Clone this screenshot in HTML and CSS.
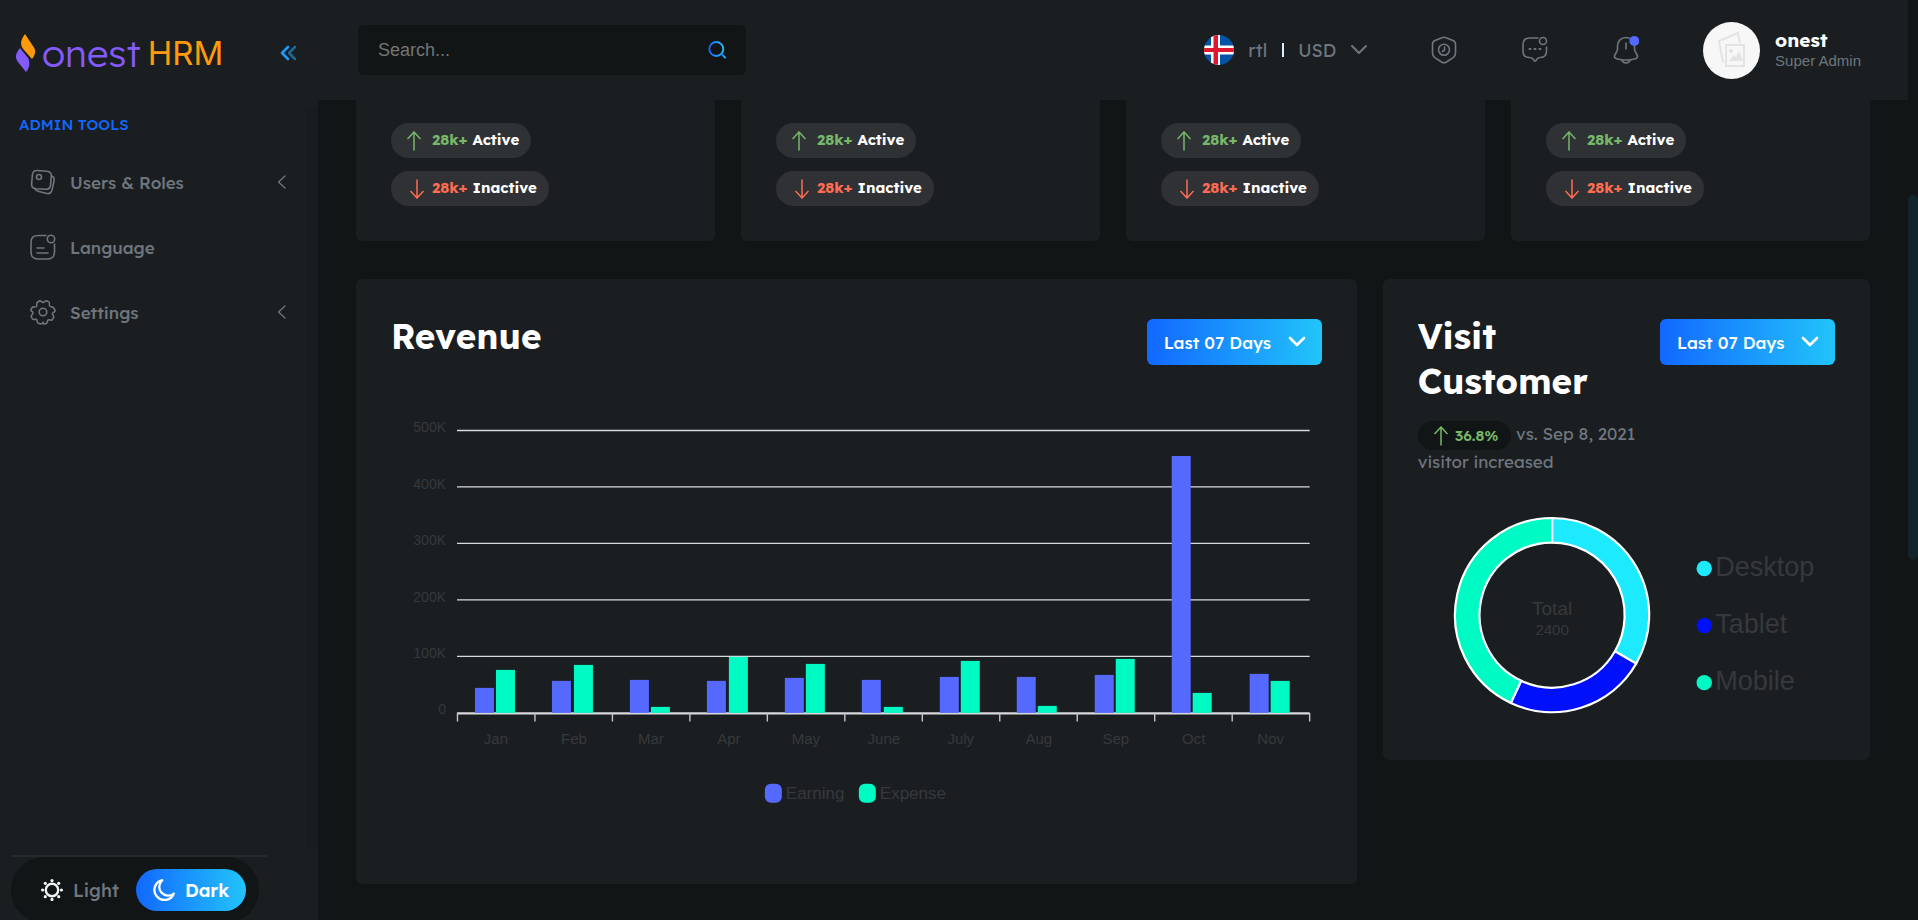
FILE: index.html
```html
<!DOCTYPE html>
<html lang="en">
<head>
<meta charset="utf-8">
<meta name="viewport" content="width=device-width, initial-scale=1">
<title>onestHRM – Dashboard</title>
<link rel="stylesheet" href="styles.css">
</head>
<body>
<svg class="defs" width="0" height="0" aria-hidden="true">
  <defs>
    <linearGradient id="brand" x1="0" y1="0" x2="1" y2="0"><stop offset="0" stop-color="#1268ff"/><stop offset="1" stop-color="#22c4fa"/></linearGradient>
    <symbol id="up" viewBox="0 0 14 20"><path d="M7 19.500V1M.5 8L7 1l6.500 7" fill="none" stroke="currentColor" stroke-width="1.500"/></symbol>
    <symbol id="down" viewBox="0 0 14 20"><path d="M7 .5V19M.5 12L7 19l6.500-7" fill="none" stroke="currentColor" stroke-width="1.500"/></symbol>
    <symbol id="caret" viewBox="0 0 18 12"><path d="M2 2l7 7 7-7" fill="none" stroke="currentColor" stroke-linecap="round" stroke-linejoin="round"/></symbol>
  </defs>
</svg>

<aside class="sidebar">
  <div class="brand">
    <a class="logo" href="#" aria-label="onestHRM">
      <svg class="flame" viewBox="0 0 20 38" width="20" height="38" aria-hidden="true">
        <path d="M9 0C4 7 4 11 8 16l8 9c4-5 4-9 1-13Z" fill="#ff9a0c"/>
        <path d="M4 14c-5 6-5 10-2 14l8 10c4-5 4-10 2-14Z" fill="#845bfb"/>
      </svg>
      <span class="logo-a">onest</span><span class="logo-b">HRM</span>
    </a>
    <button class="collapse" type="button" aria-label="Collapse menu">
      <svg viewBox="0 0 18 16" width="18" height="16" fill="none" stroke-width="2.600" stroke-linecap="round" stroke-linejoin="round"><path d="M8 2L2 8l6 6" stroke="#1b9bff"/><path d="M15 2L9 8l6 6" stroke="#1d6a91"/></svg>
    </button>
  </div>
  <nav class="nav">
    <h2 class="nav-title">ADMIN TOOLS</h2>
    <a class="nav-item" href="#">
      <svg viewBox="0 0 26 26" width="26" height="26" class="ico"><path d="M7 1.500l10 .800c3 .3 4.500 2 4.300 4.800l-.8 9c-.3 3-2 4.300-4.700 4.200L6 19.800c-3-.3-4.600-2-4.400-4.800l.8-9C2.700 3 4.200 1.400 7 1.500Z"/><path d="M22 7c2 1 2.500 2.500 2 5l-2 9c-.8 3-2.500 4-5.200 3.500L9 22.500c-2-.5-3.500-1.200-4.300-2.800"/><circle cx="9" cy="8" r="2.500"/></svg>
      <span>Users &amp; Roles</span>
      <svg viewBox="0 0 9 14" width="9" height="14" class="ico arrow"><path d="M8 1L1.500 7 8 13"/></svg>
    </a>
    <a class="nav-item" href="#">
      <svg viewBox="0 0 26 26" width="26" height="26" class="ico"><path d="M16 1.500H8.500C3 1.500 1 3.500 1 9v8.500c0 5.500 2 7.500 7.500 7.500H17c5.500 0 7.500-2 7.500-7.500V10"/><circle cx="21" cy="5" r="3.700"/><path d="M7 14h7M7 19h11"/></svg>
      <span>Language</span>
    </a>
    <a class="nav-item" href="#">
      <svg viewBox="0 0 26 26" width="26" height="26" class="ico"><circle cx="13" cy="13" r="3.800"/><path d="M13 3.500c1.500 0 2-2 3.500-1.800l2.300 1.200c1.300 1 .1 2.600.8 3.900.8 1.300 2.900.8 4 2 .8 1 1.400 2 1.500 3-.1 1.500-2.300 1.200-2.600 2.600-.4 1.500 1.500 2.400 1.200 3.900l-1.500 2.500c-1.200 1-2.500-.6-4 .2-1.300.9-.5 2.800-2 3.500l-2 .4c-1.500.1-1.200-1.800-1.200-1.800s-.5 1.900-2.500 1.800l-2.500-.9c-1.300-1-.3-2.300-1.300-3.300-1.300-1-3 .5-4.200-.7L1.200 17.500c-.3-1.500 1.800-2 1.800-3.800S.5 12.500.8 10.700l1.500-2.400c1.200-1 3 .3 4.100-.8 1-1.300-.3-3 1-4.200l2.400-1.500C11.500 1.500 11.500 3.500 13 3.500Z"/></svg>
      <span>Settings</span>
      <svg viewBox="0 0 9 14" width="9" height="14" class="ico arrow"><path d="M8 1L1.500 7 8 13"/></svg>
    </a>
    <div class="nav-track"></div>
  </nav>
  <div class="theme">
    <div class="theme-switch">
      <button type="button" class="theme-btn">
        <svg viewBox="0 0 22 22" width="22" height="22"><circle cx="11" cy="11" r="6.200" fill="none" stroke="#f2f5f7" stroke-width="2.400"/><g fill="#f2f5f7"><circle cx="11" cy="1.600" r="1.600"/><circle cx="11" cy="20.400" r="1.600"/><circle cx="1.600" cy="11" r="1.600"/><circle cx="20.400" cy="11" r="1.600"/><circle cx="4.300" cy="4.300" r="1.600"/><circle cx="17.700" cy="4.300" r="1.600"/><circle cx="4.300" cy="17.700" r="1.600"/><circle cx="17.700" cy="17.700" r="1.600"/></g></svg>
        <span>Light</span>
      </button>
      <button type="button" class="theme-btn active">
        <svg viewBox="0 0 22 22" width="22" height="22"><path d="M9.300 1.200A10 10 0 1 0 20.800 14.500 8.500 8.500 0 0 1 9.300 1.200Z" fill="none" stroke="#fff" stroke-width="2.300" stroke-linejoin="round"/></svg>
        <span>Dark</span>
      </button>
    </div>
  </div>
</aside>

<header class="topbar">
  <form class="search">
    <input type="search" placeholder="Search..." aria-label="Search">
    <button type="button" aria-label="Search"><svg viewBox="0 0 18 18" width="18" height="18" fill="none" stroke="url(#brand)" stroke-width="1.800" stroke-linecap="round"><circle cx="8.300" cy="8" r="7"/><path d="M14 13.500l3 3"/></svg></button>
  </form>
  <button class="locale" type="button">
    <svg viewBox="0 0 30 30" width="30" height="30" aria-hidden="true"><clipPath id="round"><circle cx="15" cy="15" r="15"/></clipPath><g clip-path="url(#round)"><path d="M0 0h30v30H0z" fill="#0553a5"/><path d="M7 0h9v30H7zM0 10.500h30v9H0z" fill="#fff"/><path d="M9.500 0h4.500v30H9.500zM0 13h30v4H0z" fill="#e0182f"/></g></svg>
    <span>rtl</span><i class="bar"></i><span>USD</span>
    <svg class="locale-caret" width="18" height="12"><use href="#caret"/></svg>
  </button>
  <div class="tools">
    <button type="button" aria-label="Attendance"><svg viewBox="0 0 26 28" width="26" height="28" class="ico"><path d="M11 1.700c1.300-.6 2.700-.6 4 0l7 2.800c1.600.7 2.500 1.800 2.500 3.500v9c0 2-.8 3.500-2.300 4.700L15.500 26c-1.600 1-3.400 1-5 0l-6.700-4.300C2.300 20.500 1.500 19 1.500 17V8c0-1.700.9-2.800 2.500-3.500Z"/><circle cx="13" cy="13.700" r="5.500"/><path d="M13.500 11v3l-2 1.500"/></svg></button>
    <button type="button" aria-label="Messages"><svg viewBox="0 0 26 28" width="26" height="28" class="ico"><path d="M16 2H8C3 2 1 4 1 9v6c0 5 2 6.500 6 6.500 2 0 3 0 3.800 1.200l1.200 1.800c.6.800 1.400.8 2 0l1.200-1.800c.8-1.200 1.800-1.200 3.300-1.200 4 0 6-1.500 6-6.500v-4"/><circle cx="21" cy="5" r="3.500"/><path d="M7.500 13h1M12.500 13h1M17.500 13h1" stroke-width="2"/></svg></button>
    <button type="button" aria-label="Notifications"><svg viewBox="0 0 26 28" width="26" height="28" class="ico"><path d="M13 1.500C8 1.500 4.500 5 4.500 10v3c0 3-2.500 4.700-3 7-.3 1.500.5 2.300 2 2.700 6 1.700 13 1.700 19 0 1.500-.4 2.300-1.200 2-2.700-.5-2.300-3-4-3-7v-3c0-5-3.500-8.500-8.500-8.500ZM13 7v6M8.500 23.500c1.500 4.500 7.500 4.500 9 0"/><circle cx="21.300" cy="5" r="5" fill="#5669ff" stroke="none"/></svg></button>
  </div>
  <div class="profile">
    <svg class="avatar" viewBox="0 0 57 57" width="57" height="57" aria-hidden="true"><circle cx="28.500" cy="28.500" r="28.500" fill="#f7f7f7"/><g fill="none" stroke="#e3e3e3" stroke-width="2"><path d="M20 40.500L16 19l19-8 2 10"/><path d="M23 23h18v21H23z"/></g><path d="M26 39l5-6 2 2 3-6 4 10Z" fill="#e3e3e3"/><circle cx="28" cy="29" r="2" fill="#e3e3e3"/></svg>
    <div><strong>onest</strong><small>Super Admin</small></div>
  </div>
</header>

<main class="content">
  <section class="stat"><p class="pill up"><svg width="14" height="20"><use href="#up"/></svg><b>28k+</b><span>Active</span></p><p class="pill down"><svg width="14" height="20"><use href="#down"/></svg><b>28k+</b><span>Inactive</span></p></section>
  <section class="stat"><p class="pill up"><svg width="14" height="20"><use href="#up"/></svg><b>28k+</b><span>Active</span></p><p class="pill down"><svg width="14" height="20"><use href="#down"/></svg><b>28k+</b><span>Inactive</span></p></section>
  <section class="stat"><p class="pill up"><svg width="14" height="20"><use href="#up"/></svg><b>28k+</b><span>Active</span></p><p class="pill down"><svg width="14" height="20"><use href="#down"/></svg><b>28k+</b><span>Inactive</span></p></section>
  <section class="stat"><p class="pill up"><svg width="14" height="20"><use href="#up"/></svg><b>28k+</b><span>Active</span></p><p class="pill down"><svg width="14" height="20"><use href="#down"/></svg><b>28k+</b><span>Inactive</span></p></section>

  <section class="card revenue">
    <div class="card-head">
      <h1>Revenue</h1>
      <button class="range" type="button">Last 07 Days <svg width="18" height="12"><use href="#caret"/></svg></button>
    </div>
    <svg class="chart" viewBox="0 0 931 449" role="img" aria-label="Earning and expense by month">
      <g transform="translate(66 313)">
        <path d="M0-282.500h853M0-226h853M0-169.500h853M0-113h853M0-56.500h853" stroke="#d9dadd" stroke-width="1.300"/>
        <path d="M0 .5h853" stroke="#d9dadd" stroke-width="2.400"/>
        <path d="M.5 0v8.500M78 0v8.500M155.500 0v8.500M233 0v8.500M310.500 0v8.500M388 0v8.500M465.500 0v8.500M543 0v8.500M620.500 0v8.500M698 0v8.500M775.500 0v8.500M853 0v8.500" stroke="#c4c6c9" stroke-width="1.400"/>
        <g fill="#5669ff">
          <rect x="18" y="-25" width="19" height="25"/><rect x="95" y="-32" width="19" height="32"/><rect x="173" y="-33" width="19" height="33"/><rect x="250" y="-32" width="19" height="32"/><rect x="328" y="-35" width="19" height="35"/><rect x="405" y="-33" width="19" height="33"/><rect x="483" y="-36" width="19" height="36"/><rect x="560" y="-36" width="19" height="36"/><rect x="638" y="-38" width="19" height="38"/><rect x="715" y="-257" width="19" height="257"/><rect x="793" y="-39" width="19" height="39"/>
        </g>
        <g fill="#00fac4">
          <rect x="39" y="-43" width="19" height="43"/><rect x="117" y="-48" width="19" height="48"/><rect x="194" y="-6" width="19" height="6"/><rect x="272" y="-56" width="19" height="56"/><rect x="349" y="-49" width="19" height="49"/><rect x="427" y="-6" width="19" height="6"/><rect x="504" y="-52" width="19" height="52"/><rect x="581" y="-7" width="19" height="7"/><rect x="659" y="-54" width="19" height="54"/><rect x="736" y="-20" width="19" height="20"/><rect x="814" y="-32" width="19" height="32"/>
        </g>
        <g class="axis-y"><text x="-11" y="-281">500K</text><text x="-11" y="-224">400K</text><text x="-11" y="-168">300K</text><text x="-11" y="-111">200K</text><text x="-11" y="-55">100K</text><text x="-11" y="1">0</text></g>
        <g class="axis-x"><text x="39" y="31">Jan</text><text x="117" y="31">Feb</text><text x="194" y="31">Mar</text><text x="272" y="31">Apr</text><text x="349" y="31">May</text><text x="427" y="31">June</text><text x="504" y="31">July</text><text x="582" y="31">Aug</text><text x="659" y="31">Sep</text><text x="737" y="31">Oct</text><text x="814" y="31">Nov</text></g>
        <g class="axis-legend"><rect x="308" y="71" width="17" height="19" rx="6" fill="#5669ff"/><text x="329" y="86">Earning</text><rect x="402" y="71" width="17" height="19" rx="6" fill="#00fac4"/><text x="423" y="86">Expense</text></g>
      </g>
    </svg>
  </section>

  <section class="card visit">
    <div class="card-head">
      <div>
        <h1>Visit Customer</h1>
        <p class="trend"><span class="badge"><svg width="14" height="20"><use href="#up"/></svg>36.8%</span> vs. Sep 8, 2021 visitor increased</p>
      </div>
      <button class="range" type="button">Last 07 Days <svg width="18" height="12"><use href="#caret"/></svg></button>
    </div>
    <svg class="donut" viewBox="0 0 417 225" role="img" aria-label="Visitors by device">
      <g transform="translate(134 115)">
        <g stroke="#fff" stroke-width="2.200" stroke-linejoin="round">
          <path d="M0-97A97 97 0 0 1 84 48.500L62.800 36.200A72.500 72.500 0 0 0 0-72.500Z" fill="#1de9ff"/>
          <path d="M84 48.500A97 97 0 0 1-41.300 87.800L-30.900 65.600A72.500 72.500 0 0 0 62.800 36.200Z" fill="#0010fa"/>
          <path d="M-41.300 87.800A97 97 0 0 1 0-97V-72.500A72.500 72.500 0 0 0-30.900 65.600Z" fill="#00fac4"/>
        </g>
        <g class="donut-total"><text class="big" x="0" y="0">Total</text><text x="0" y="20">2400</text></g>
      </g>
      <g class="donut-legend"><circle cx="286" cy="68.500" r="7.700" fill="#1de9ff"/><text x="297" y="76">Desktop</text><circle cx="286" cy="125.500" r="7.700" fill="#0010fa"/><text x="297" y="133">Tablet</text><circle cx="286" cy="182.500" r="7.700" fill="#00fac4"/><text x="297" y="190">Mobile</text></g>
    </svg>
  </section>
</main>
<div class="page-scroll"><div class="page-thumb"></div></div>
</body>
</html>
```
FILE: styles.css
```css
:root {
  --bg: #111516;
  --card: #1a1e21;
  --muted: #6f767e;
  --ink: #36393c;
  --brand: linear-gradient(90deg, #1268ff, #22c4fa);
  --ui: Lexend, Inter, sans-serif;
  --plain: "Liberation Sans", Arial, sans-serif;
}
* { box-sizing: border-box; }
body {
  margin: 0;
  height: 100vh;
  overflow: hidden;
  display: grid;
  grid-template-columns: 318px minmax(0, 1fr) 10px;
  grid-template-rows: 100px minmax(0, 1fr);
  background: var(--bg);
  color: #fff;
  font-family: var(--ui);
  font-size: 16px;
}
button { font: inherit; color: inherit; border: 0; background: none; padding: 0; cursor: pointer; }
a { color: inherit; text-decoration: none; }
svg { display: block; flex: none; }
h1, h2, p { margin: 0; }
.defs { position: absolute; }
.ico { fill: none; stroke: currentColor; stroke-width: 1.6; stroke-linecap: round; stroke-linejoin: round; }

.sidebar { grid-row: 1 / 3; display: flex; flex-direction: column; background: var(--card); }
.brand { height: 105px; display: flex; align-items: center; justify-content: space-between; padding: 0 20px 0 16px; }
.logo { display: flex; align-items: center; line-height: 38px; }
.logo-a { margin-left: 6px; color: #845bfb; font-size: 38px; font-weight: 300; }
.logo-b { margin-left: 7px; color: #ff9a0c; font-family: Inter, sans-serif; font-size: 33px; }
.nav { position: relative; flex: 1; min-height: 0; display: flex; flex-direction: column; padding: 10px 32px 0 19px; color: var(--muted); }
.nav-title { margin-bottom: 25px; color: #1268ff; font-size: 15px; line-height: 20px; font-weight: 500; }
.nav-item { display: flex; align-items: center; gap: 14px; height: 44px; margin-bottom: 21px; padding-left: 11px; font-size: 17px; font-weight: 500; }
.arrow { margin-left: auto; stroke-width: 1.3; }
.nav-track { position: absolute; top: 2px; right: 0; bottom: 7px; width: 12px; background: #181c1e; }
.theme { flex: 0 0 65px; overflow: hidden; padding: 0 51px 0 11px; }
.theme::before { content: ""; display: block; height: 2px; background: #25292c; }
.theme-switch { display: flex; align-items: center; justify-content: space-between; width: 248px; height: 66px; padding: 12px 13px 12px 12px; border-radius: 33px; background: var(--bg); }
.theme-btn { display: flex; align-items: center; gap: 10px; height: 42px; padding: 0 17px 0 18px; border-radius: 21px; color: var(--muted); font-size: 18px; font-weight: 500; }
.theme-btn.active { padding: 0 17px; background: var(--brand); color: #fff; font-weight: 600; }

.topbar { display: flex; align-items: center; background: var(--card); padding: 0 47px 0 40px; color: var(--muted); }
.search { display: flex; align-items: center; width: 388px; height: 50px; padding: 0 20px; border-radius: 6px; background: var(--bg); margin-right: auto; }
.search input { flex: 1; min-width: 0; padding: 0; border: 0; outline: 0; background: none; color: #fff; font: 18px var(--plain); }
.search input::placeholder { color: #757575; opacity: 1; }
.locale { display: flex; align-items: center; font-size: 18px; margin-right: 63px; }
.locale span { margin-left: 14px; }
.bar { width: 2px; height: 14px; margin-left: 15px; background: #d8efff; }
.locale-caret { margin-left: 14px; stroke-width: 2; }
.tools { display: flex; gap: 65px; margin-right: 64px; }
.profile { display: flex; align-items: center; gap: 15px; }
.profile strong, .profile small { display: block; }
.profile strong { color: #fff; font-size: 19px; line-height: 22px; font-weight: 700; }
.profile small { font: 15px/20px var(--plain); }

.content { display: grid; grid-template-columns: repeat(12, minmax(0, 1fr)); grid-auto-rows: max-content; align-items: start; column-gap: 26px; row-gap: 38px; padding: 0 38px; overflow: hidden; }
.stat { grid-column: span 3; padding: 23px 35px 35px; border-radius: 0 0 6px 6px; background: var(--card); font-size: 15px; line-height: 18px; font-weight: 700; }
.pill { display: flex; align-items: center; width: max-content; height: 35px; padding: 0 12px 0 16px; border-radius: 18px; background: #2f3235; }
.pill + .pill { margin-top: 13px; }
.pill b, .pill span { padding-bottom: 2px; font-weight: 700; }
.pill b { margin: 0 5px 0 11px; }
.pill.up { color: #78b769; }
.pill.down { color: #ff6c52; padding-left: 19px; background: #303135; }
.pill.down b { margin-left: 8px; }
.pill span { color: #fff; }

.card { padding: 35px; border-radius: 6px; background: var(--card); }
.revenue { grid-column: span 8; }
.visit { grid-column: span 4; }
.card-head { display: flex; align-items: flex-start; justify-content: space-between; gap: 8px; }
.card h1 { font-size: 35px; line-height: 45px; font-weight: 700; }
.range { flex: none; display: flex; align-items: center; justify-content: space-between; width: 175px; height: 46px; margin-top: 5px; padding: 0 16px 0 17px; border-radius: 6px; background: var(--brand); color: #fff; font-size: 17px; font-weight: 500; stroke-width: 2.6; }
.chart, .donut { width: 100%; height: auto; font-family: var(--plain); }
.chart { margin-top: 35px; }
.chart text, .donut text { fill: var(--ink); }
.axis-y { font-size: 14px; text-anchor: end; }
.axis-x { font-size: 15px; text-anchor: middle; }
.axis-legend { font-size: 17px; }
.trend { margin-top: 16px; color: var(--muted); font-size: 17px; line-height: 28px; }
.badge { display: inline-flex; align-items: center; gap: 7px; height: 29px; margin: -2px 0; padding: 0 13px 0 16px; border-radius: 15px; background: var(--bg); color: #78b769; font-size: 15px; font-weight: 600; vertical-align: middle; }
.donut { margin-top: 24px; }
.donut-total { font-size: 15px; text-anchor: middle; }
.donut-total .big { font-size: 19px; }
.donut-legend { font-size: 27px; }

.page-scroll { grid-column: 3; grid-row: 1 / 3; padding-top: 195px; background: var(--bg); }
.page-thumb { height: 365px; border-radius: 5px; background: #12252a; }
```
